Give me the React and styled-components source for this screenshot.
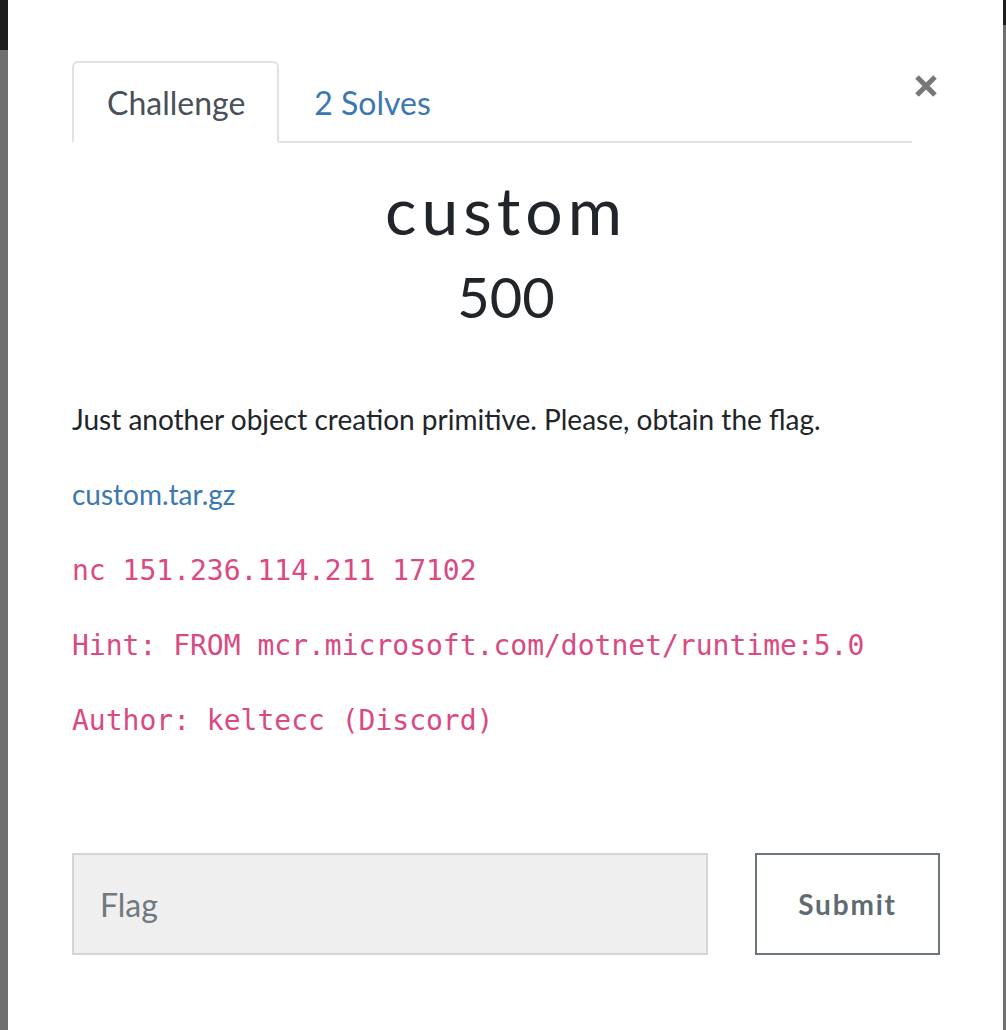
import React from 'react';
import styled, { createGlobalStyle } from 'styled-components';

const GlobalStyle = createGlobalStyle`
    html, body {
        margin: 0;
        padding: 0;
        background: #6f6f6f;
    }
    body {
        font-family: Lato, "Liberation Sans", sans-serif;
        color: #212529;
    }
`;

const Backdrop = styled.div`
    display: flex;
    height: 1030px;
    overflow: hidden;
`;

const Strip = styled.div`
    width: ${props => props.width}px;
    flex-shrink: 0;
    background: linear-gradient(
        to bottom,
        #1c1d1f 0,
        #1c1d1f ${props => props.dark}px,
        #6f6f6f ${props => props.dark}px
    );
`;

const Modal = styled.div`
    flex: 1;
    background: #ffffff;
    padding: 61px 63px 0 64px;
    box-sizing: border-box;
`;

const Header = styled.div`
    display: flex;
    align-items: flex-start;
`;

const Tabs = styled.ul`
    flex: 1;
    display: flex;
    list-style: none;
    margin: 0;
    padding: 0;
    border-bottom: 2px solid #dee2e6;
`;

const Tab = styled.li`
    margin-bottom: -2px;
    padding: 0 32px 0 33px;
    height: 82px;
    display: flex;
    align-items: center;
    font-size: 32px;
    box-sizing: border-box;
    border: 2px solid ${props => (props.active ? '#dee2e6' : 'transparent')};
    border-bottom-color: ${props => (props.active ? '#ffffff' : 'transparent')};
    border-radius: 6px 6px 0 0;
    background: ${props => (props.active ? '#ffffff' : 'transparent')};
    color: ${props => (props.active ? '#495057' : '#3b78b2')};
`;

const Close = styled.button`
    width: 28px;
    height: 52px;
    margin-top: -1px;
    padding: 0;
    border: none;
    background: none;
    display: flex;
    align-items: center;
    justify-content: center;
    color: #777777;
`;

const Title = styled.h1`
    margin: 34px 0 0;
    text-align: center;
    font-family: Lato, sans-serif;
    font-weight: 400;
    font-size: 66px;
    letter-spacing: 5px;
    line-height: 1;
    color: #212529;
`;

const Points = styled.h2`
    margin: 26px 0 0;
    text-align: center;
    font-weight: 400;
    font-size: 56px;
    line-height: 1;
    color: #212529;
`;

const Description = styled.div`
    margin-top: 73px;
`;

const Para = styled.p`
    margin: 0 0 33px;
    font-size: 28px;
    line-height: 42px;
    color: #212529;
`;

const FileLink = styled.a`
    color: #3b78b2;
    text-decoration: none;
`;

const Code = styled.code`
    font-family: "DejaVu Sans Mono", "Liberation Mono", monospace;
    font-size: 28px;
    line-height: 28px;
    color: #d94a83;
`;

const Form = styled.form`
    display: flex;
    gap: 47px;
    margin-top: 113px;
`;

const FlagInput = styled.input`
    flex: 1;
    height: 102px;
    box-sizing: border-box;
    padding: 0 26px;
    border: 2px solid #d3d6d9;
    background: #efefef;
    font-family: Lato, sans-serif;
    font-size: 32px;
    color: #495057;
    &::placeholder {
        color: #707880;
    }
`;

const SubmitButton = styled.button`
    width: 185px;
    height: 102px;
    box-sizing: border-box;
    border: 2px solid #6c757d;
    background: #ffffff;
    font-family: Lato, sans-serif;
    font-weight: 700;
    font-size: 28px;
    letter-spacing: 1.8px;
    color: #5f6b73;
`;

const CloseIcon = () => (
    <svg width="24" height="24" viewBox="0 0 24 24">
        <path d="M3 3 L21 21 M21 3 L3 21" stroke="currentColor" strokeWidth="5" />
    </svg>
);

export default function App()
{
    return (
        <>
            <GlobalStyle />
            <Backdrop>
                <Strip width={8} dark={50} />
                <Modal>
                    <Header>
                        <Tabs>
                            <Tab active>Challenge</Tab>
                            <Tab>2 Solves</Tab>
                        </Tabs>
                        <Close type="button"><CloseIcon /></Close>
                    </Header>

                    <Title>custom</Title>
                    <Points>500</Points>

                    <Description>
                        <Para>Just another object creation primitive. Please, obtain the flag.</Para>
                        <Para><FileLink href="#">custom.tar.gz</FileLink></Para>
                        <Para><Code>nc 151.236.114.211 17102</Code></Para>
                        <Para><Code>Hint: FROM mcr.microsoft.com/dotnet/runtime:5.0</Code></Para>
                        <Para><Code>Author: keltecc (Discord)</Code></Para>
                    </Description>

                    <Form onSubmit={e => e.preventDefault()}>
                        <FlagInput placeholder="Flag" />
                        <SubmitButton type="submit">Submit</SubmitButton>
                    </Form>
                </Modal>
                <Strip width={3} dark={25} />
            </Backdrop>
        </>
    );
}
